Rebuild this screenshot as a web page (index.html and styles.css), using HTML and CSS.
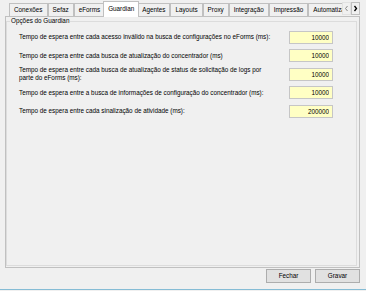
FILE: index.html
```html
<!DOCTYPE html>
<html lang="pt-BR">
<head>
    <meta charset="UTF-8" />
    <title>Configurações - Guardian</title>
    <link rel="stylesheet" href="styles.css">
</head>
<body>
<div class="window">
    <div class="tabstrip">
        <div class="tabs">
            <div class="tab">Conexões</div>
            <div class="tab">Sefaz</div>
            <div class="tab">eForms</div>
            <div class="tab active">Guardian</div>
            <div class="tab">Agentes</div>
            <div class="tab">Layouts</div>
            <div class="tab">Proxy</div>
            <div class="tab">Integração</div>
            <div class="tab">Impressão</div>
            <div class="tab">Automatização</div>
        </div>
        <div class="tab-scroll">
            <span class="scroll-btn disabled">
                <svg width="7" height="11" viewBox="0 0 7 11"><polyline points="4.5,3 2.5,5.5 4.5,8" fill="none" stroke="#8a8a8a" stroke-width="1"/></svg>
            </span>
            <span class="scroll-btn">
                <svg width="7" height="11" viewBox="0 0 7 11"><polyline points="2.5,3 4.5,5.5 2.5,8" fill="none" stroke="#000" stroke-width="1.3"/></svg>
            </span>
        </div>
    </div>

    <div class="tab-page">
        <fieldset class="group">
            <legend>Opções do Guardian</legend>
            <div class="field-row">
                <label>Tempo de espera entre cada acesso inválido na busca de configurações no eForms (ms):</label>
                <input class="num" type="text" value="10000">
            </div>
            <div class="field-row">
                <label>Tempo de espera entre cada busca de atualização do concentrador (ms)</label>
                <input class="num" type="text" value="10000">
            </div>
            <div class="field-row">
                <label>Tempo de espera entre cada busca de atualização de status de solicitação de logs por parte do eForms (ms):</label>
                <input class="num" type="text" value="10000">
            </div>
            <div class="field-row">
                <label>Tempo de espera entre a busca de informações de configuração do concentrador (ms):</label>
                <input class="num" type="text" value="10000">
            </div>
            <div class="field-row">
                <label>Tempo de espera entre cada sinalização de atividade (ms):</label>
                <input class="num" type="text" value="200000">
            </div>
        </fieldset>
    </div>

    <footer class="actions">
        <button class="btn">Fechar</button>
        <button class="btn">Gravar</button>
    </footer>
</div>
</body>
</html>
```

FILE: styles.css
```css
:root {
    --text: #000000;
    --window-bg: #f0f0f0;
    --tab-border: #c0c0c0;
    --group-border: #dcdcdc;
    --input-bg: #ffffc4;
    --input-border: #c6c6c6;
    --btn-bg: #e1e1e1;
    --btn-border: #adadad;
    --frame-line: #85bcd5;
    --font: "Liberation Sans", Arial, sans-serif;
}

*, *::before, *::after { box-sizing: border-box; }

html, body { margin: 0; }

body {
    width: 366px; height: 291px; overflow: hidden;
    background: var(--window-bg);
    font-family: var(--font); font-size: 6.33px; color: var(--text);
}

.window {
    height: 290px;
    border-bottom: 1px solid var(--frame-line);
    display: flex; flex-direction: column;
}

/* tab header */
.tabstrip {
    display: flex; align-items: flex-end;
    height: 16px; margin: 0 6px 0 9px;
}
.tabs {
    flex: 1; display: flex; align-items: flex-end;
    height: 17px; margin-bottom: -1px;
    overflow: hidden; position: relative; z-index: 1;
}
.tab {
    flex-shrink: 0; height: 13px; margin-bottom: 1px;
    padding: 0 4px; line-height: 11px; white-space: nowrap;
    border: 1px solid var(--tab-border); border-bottom: 0;
    background: var(--window-bg);
}
.tab.active {
    height: 16px; margin: 0 -2px; line-height: 13px;
    background: #ffffff; position: relative; z-index: 1;
}
.tab-scroll {
    display: flex; height: 13px; margin-bottom: 1px;
}
.scroll-btn {
    width: 9px; height: 13px;
    display: flex; align-items: center; justify-content: center;
    border: 1px solid var(--tab-border); background: var(--window-bg);
}
.scroll-btn.disabled { border-color: #e2e2e2; }

/* tab page + group box */
.tab-page {
    height: 252px; margin: 0 6px 0 5px;
    padding: 0 2px 1px 0;
    border: 1px solid var(--tab-border);
}
.group {
    height: 100%; min-width: 0; margin: 0;
    padding: 3px 0 0 0;
    border: 1px solid var(--group-border);
}
.group legend {
    margin-left: 3px; padding: 0 1px; line-height: 8px;
}

.field-row {
    display: flex; align-items: center;
    height: 18.5px; padding-left: 12px;
}
.field-row label { width: 255px; line-height: 8.5px; }
.num {
    width: 44px; height: 13px;
    margin: 0 23px 0 auto; padding: 0 3px;
    font: inherit; color: var(--text); text-align: right;
    background: var(--input-bg);
    border: 1px solid var(--input-border);
    outline: none;
}

/* bottom buttons */
.actions {
    display: flex; justify-content: flex-end; gap: 4px;
    margin: 1px 6px 0 0;
}
.btn {
    width: 45px; height: 14px; padding: 0;
    font: inherit; color: var(--text); line-height: 12px;
    background: var(--btn-bg);
    border: 1px solid var(--btn-border);
}
```
